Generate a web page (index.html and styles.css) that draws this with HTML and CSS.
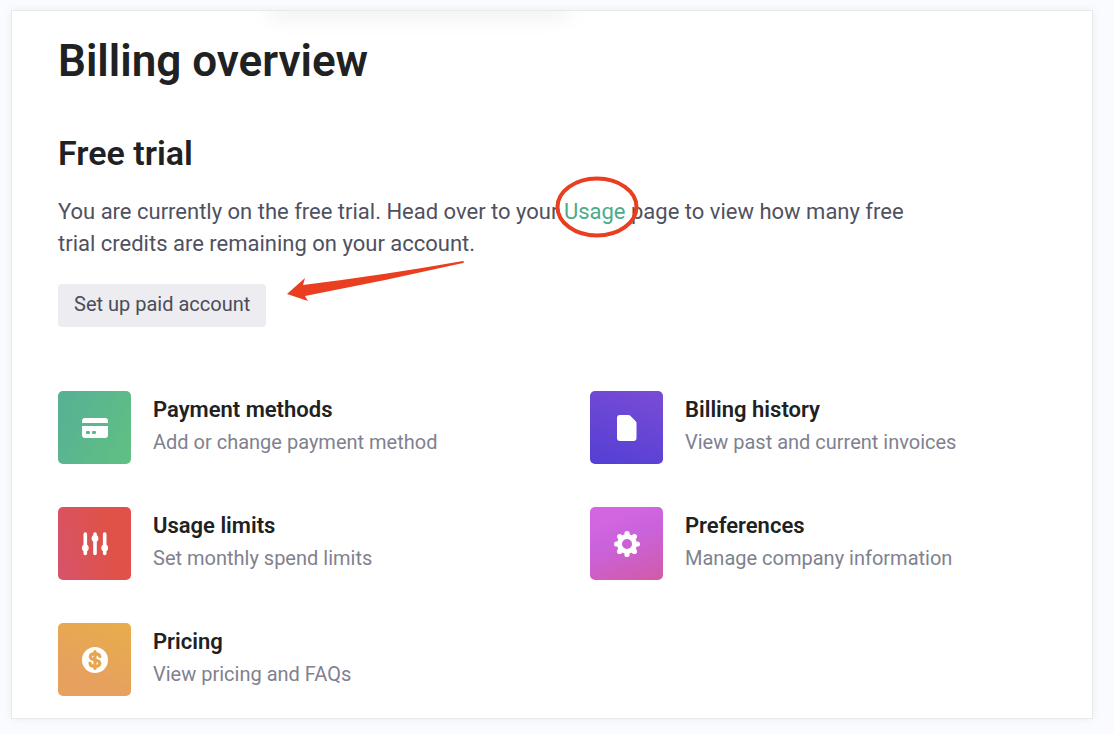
FILE: index.html
```html
<!DOCTYPE html>
<html lang="en">
<head>
<meta charset="utf-8">
<title>Billing overview</title>
<link rel="stylesheet" href="styles.css">
</head>
<body>
<main class="panel">
  <h1 class="title">Billing overview</h1>
  <section class="plan">
    <h2 class="subtitle">Free trial</h2>
    <p class="intro">You are currently on the free trial. Head over to your <span class="marked"><a class="link" href="#usage">Usage</a><svg class="ring" viewBox="0 0 84 62" aria-hidden="true"><ellipse cx="42" cy="31" rx="39.5" ry="28.5" fill="none" stroke="#e93e1f" stroke-width="4"/></svg></span> page to view how many free trial credits are remaining on your account.</p>
    <div class="actions">
      <button class="button" type="button">Set up paid account</button>
      <svg class="arrow" viewBox="0 0 180 42" aria-hidden="true"><path d="M1 34 L19 18 L17 25 Q98 15 177 1 Q179 2 177 3 Q98 21 19 36 L22 41 Z" fill="#e93e1f"/></svg>
    </div>
  </section>
  <nav class="grid" aria-label="Billing">
    <a class="item" href="#payment">
      <span class="tile green"><svg class="icon" viewBox="0 0 26 26" aria-hidden="true"><path fill="#fff" d="M3 3h20a3 3 0 0 1 3 3v2H0V6a3 3 0 0 1 3-3zM0 11h26v9a3 3 0 0 1-3 3H3a3 3 0 0 1-3-3zM5 16a1 1 0 0 0-1 1v1a1 1 0 0 0 1 1h2a1 1 0 0 0 1-1v-1a1 1 0 0 0-1-1zM11 16a1 1 0 0 0-1 1v1a1 1 0 0 0 1 1h2a1 1 0 0 0 1-1v-1a1 1 0 0 0-1-1z"/></svg></span>
      <span class="text"><strong class="name">Payment methods</strong><span class="note">Add or change payment method</span></span>
    </a>
    <a class="item" href="#history">
      <span class="tile indigo"><svg class="icon" viewBox="0 0 26 26" aria-hidden="true"><path fill="#fff" d="M6 0h8.500a3 3 0 0 1 2 1l5 5a3 3 0 0 1 1 2v15a3 3 0 0 1-3 3H6a3 3 0 0 1-3-3V3a3 3 0 0 1 3-3z"/></svg></span>
      <span class="text"><strong class="name">Billing history</strong><span class="note">View past and current invoices</span></span>
    </a>
    <a class="item" href="#limits">
      <span class="tile red"><svg class="icon" viewBox="0 0 26 26" aria-hidden="true"><g stroke="#fff" stroke-width="3.600" stroke-linecap="round"><path d="M3.300 3v19.500M13 3v19.500M22.700 3v19.500"/></g><g fill="#fff"><circle cx="3.300" cy="17" r="3.400"/><circle cx="13" cy="7.500" r="3.400"/><circle cx="22.700" cy="17" r="3.400"/></g></svg></span>
      <span class="text"><strong class="name">Usage limits</strong><span class="note">Set monthly spend limits</span></span>
    </a>
    <a class="item" href="#preferences">
      <span class="tile pink"><svg class="icon" viewBox="0 0 26 26" aria-hidden="true"><circle cx="13" cy="13" r="7.500" fill="none" stroke="#fff" stroke-width="5"/><g fill="#fff"><circle cx="13" cy="2.600" r="2.600"/><circle cx="20.400" cy="5.600" r="2.600"/><circle cx="23.400" cy="13" r="2.600"/><circle cx="20.400" cy="20.400" r="2.600"/><circle cx="13" cy="23.400" r="2.600"/><circle cx="5.600" cy="20.400" r="2.600"/><circle cx="2.600" cy="13" r="2.600"/><circle cx="5.600" cy="5.600" r="2.600"/></g></svg></span>
      <span class="text"><strong class="name">Preferences</strong><span class="note">Manage company information</span></span>
    </a>
    <a class="item" href="#pricing">
      <span class="tile orange"><svg class="icon" viewBox="0 0 26 26" aria-hidden="true"><circle cx="13" cy="13" r="13" fill="#fff"/><path d="M17.800 9.500C17.300 7.400 15.300 6.700 13 6.700c-2.700 0-4.700 1.100-4.700 3.100 0 4.300 9.500 2.100 9.500 6.400 0 2.100-2.100 3.200-4.800 3.200-2.600 0-4.700-1.100-5-3.200M13 4.500v17" fill="none" stroke="#e8a54f" stroke-width="3.200" stroke-linecap="round"/></svg></span>
      <span class="text"><strong class="name">Pricing</strong><span class="note">View pricing and FAQs</span></span>
    </a>
  </nav>
</main>
</body>
</html>
```

FILE: styles.css
```css
* { box-sizing: border-box; }
body {
  margin: 0;
  padding: 10px 21px 16px 11px;
  background: #fafbff;
  font-family: Roboto, "Liberation Sans", sans-serif;
  color: #202123;
}
.panel {
  position: relative;
  overflow: hidden;
  padding: 24px 48px 22px 46px;
  background: #fff;
  border: 1px solid #e8e9ea;
  box-shadow: 0 0 8px rgba(0, 0, 0, 0.06);
}
.panel::before {
  content: "";
  position: absolute;
  top: -20px;
  left: 256px;
  width: 300px;
  height: 20px;
  box-shadow: 0 4px 24px rgba(0, 0, 0, 0.08);
}
.title {
  margin: 0;
  font-size: 44px;
  line-height: 52px;
  font-weight: 600;
}
.subtitle {
  margin: 46px 0 0;
  font-size: 34px;
  line-height: 40px;
  font-weight: 600;
}
.intro {
  max-width: 868px;
  margin: 23px 0 0;
  font-size: 22px;
  line-height: 32px;
  color: #50515f;
}
.marked { position: relative; }
.link { color: #4aac8b; text-decoration: none; }
.ring {
  position: absolute;
  top: -23px;
  left: -9px;
  width: 84px;
  height: 62px;
}
.actions {
  display: flex;
  align-items: flex-start;
  gap: 20px;
  margin-top: 24px;
}
.button {
  height: 43px;
  padding: 0 16px 3px;
  border: 0;
  border-radius: 4px;
  background: #ececf1;
  font: inherit;
  font-size: 20px;
  color: #4b4c57;
}
.arrow {
  flex: none;
  width: 180px;
  height: 42px;
  margin: -24px 0 0;
}
.grid {
  display: grid;
  grid-template-columns: 1fr 1fr;
  gap: 43px 78px;
  margin-top: 64px;
}
.item {
  display: flex;
  gap: 22px;
  color: inherit;
  text-decoration: none;
}
.tile {
  display: grid;
  place-items: center;
  flex: none;
  width: 73px;
  height: 73px;
  border-radius: 5px;
}
.icon { width: 26px; height: 26px; overflow: visible; }
.green { background: linear-gradient(115deg, #56b095, #61c083); }
.indigo { background: linear-gradient(20deg, #533fd4, #7a4cd6); }
.red { background: linear-gradient(75deg, #d6536b, #e05247 70%); }
.pink { background: linear-gradient(160deg, #d166e0 20%, #ca62db 45%, #d15ba8); }
.orange { background: linear-gradient(25deg, #e6a15e 30%, #e8ad4a); }
.text { display: flex; flex-direction: column; padding-top: 2px; }
.name { font-size: 22px; line-height: 33px; font-weight: 600; }
.note { font-size: 20px; line-height: 33px; color: #80818f; }
```
